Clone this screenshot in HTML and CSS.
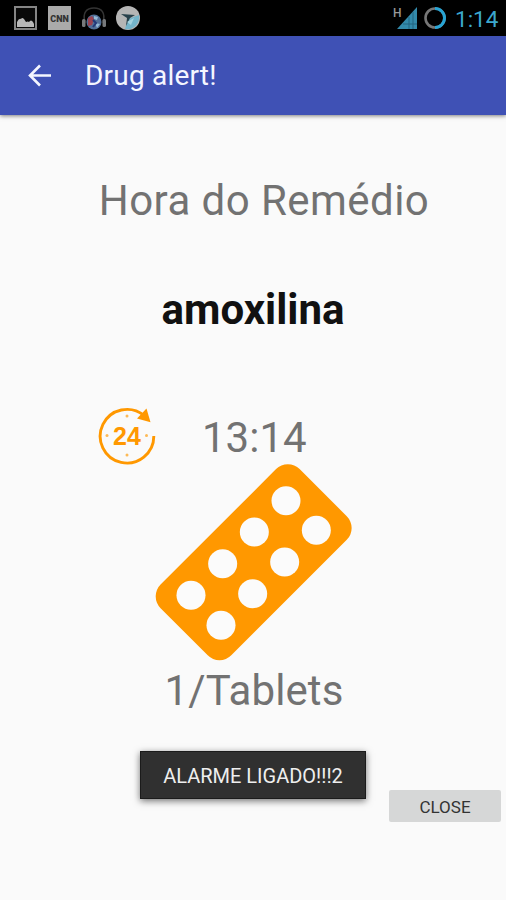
FILE: index.html
```html
<!DOCTYPE html>
<html lang="pt">
<head>
<meta charset="utf-8">
<title>Drug alert!</title>
<link rel="stylesheet" href="styles.css">
</head>
<body>
<div class="statusbar">
  <div class="notifications">
    <svg class="note" viewBox="0 0 24 24"><rect x="1" y="1" width="21" height="22" fill="#090909" stroke="#858585" stroke-width="2"/><path d="M3 21v-5q2-4 4-3 1-2 3 0l2 3q2-1 3 0 2-3 4 0l1 2v3z" fill="#b8b8b8"/></svg>
    <svg class="note" viewBox="0 0 24 24"><rect width="23" height="24" fill="#aaa"/><text class="cnn" x="11.5" y="15.5" text-anchor="middle">CNN</text></svg>
    <svg class="note" viewBox="0 0 24 24"><path d="M3 17C0 6 5 2 12 2s12 4 9 15" fill="none" stroke="#343434" stroke-width="1.6"/><circle cx="12" cy="16" r="7.5" fill="#526f96"/><path d="M6 12l4-2 2 3-2 6-4 1z" fill="#9b4250"/><path d="M12 10l4 1-1 3-3-1zM13 17l5 1-3 4z" fill="#93b8d5"/><path d="M11 14l3 3-3 4" fill="none" stroke="#233979" stroke-width="2"/><rect x="0" y="13" width="3.5" height="8" rx="1.5" fill="#77797b"/><rect x="20.5" y="13" width="3.5" height="8" rx="1.5" fill="#77797b"/></svg>
    <svg class="note" viewBox="0 0 24 24"><circle cx="12" cy="12" r="12" fill="#b5b5b5"/><path d="M23 9a12 12 0 0 1-14 14l3-10z" fill="#74b4ca"/><path d="M5 8l14 1-5 3-4 8 1-8z" fill="#28414b"/><path d="M11 16l7-4-3 7z" fill="#a4d2df"/></svg>
  </div>
  <div class="system">
    <svg class="signal" viewBox="0 0 25 24"><text class="network" x="0" y="11">H</text><path d="M24 1v22H4z" fill="#338aab"/><path d="M10 18h14M16 11v12M20 6v17" stroke="#236580" stroke-width="1"/></svg>
    <svg class="battery" viewBox="0 0 24 24"><circle cx="12" cy="12" r="9.5" fill="none" stroke="#777" stroke-width="2.6"/><path d="M12 2.5a9.5 9.5 0 0 1 0 19" fill="none" stroke="#27a4d4" stroke-width="3"/></svg>
    <span class="clock">1:14</span>
  </div>
</div>
<header class="appbar">
  <svg class="back" viewBox="0 0 24 24"><path d="M23 11.5H2M12 1.5L2 11.5l10 10" fill="none" stroke="#f4f6ff" stroke-width="2.6"/></svg>
  <h1 class="title">Drug alert!</h1>
</header>
<main class="content">
  <p class="heading">Hora do Remédio</p>
  <p class="drug">amoxilina</p>
  <div class="schedule">
    <svg class="repeat" viewBox="0 0 60 60"><path d="M46 10.5A26.8 26.8 0 1 0 55.8 31" fill="none" stroke="#ff9800" stroke-width="2.9"/><path d="M48.5 3.5l4 13.8L39 13.5z" fill="#ff9800"/><g fill="#ff9800" opacity=".65"><circle cx="29" cy="11" r="1.5"/><circle cx="29" cy="50" r="1.5"/><circle cx="9" cy="30.5" r="1.5"/><circle cx="48.5" cy="30.5" r="1.5"/></g><text class="hours" x="29" y="39.5" text-anchor="middle">24</text></svg>
    <span class="time">13:14</span>
  </div>
  <svg class="blister" viewBox="0 0 660 645"><rect x="32" y="172" width="590" height="300" rx="50" fill="#ff9800" transform="rotate(-45 326 323)"/><g fill="#fbfbfb"><circle cx="423" cy="137" r="43.5"/><circle cx="328" cy="231" r="43.5"/><circle cx="233" cy="326" r="43.5"/><circle cx="138" cy="421" r="43.5"/><circle cx="514" cy="226" r="43.5"/><circle cx="419" cy="321" r="43.5"/><circle cx="323" cy="416" r="43.5"/><circle cx="228" cy="511" r="43.5"/></g></svg>
  <p class="dose">1/Tablets</p>
  <div class="toast">ALARME LIGADO!!!2</div>
  <button class="close">CLOSE</button>
</main>
</body>
</html>
```
FILE: styles.css
```css
* { box-sizing: border-box; }
body { margin: 0; width: 506px; height: 900px; overflow: hidden; background: #fafafa; font-family: Roboto, sans-serif; display: flex; flex-direction: column; }
p, h1 { margin: 0; }
svg { display: block; flex: none; }
.statusbar { height: 36px; flex: none; background: #000; display: flex; justify-content: space-between; padding: 6px 8px 0 14px; }
.notifications { display: flex; gap: 10px; }
.note { width: 24px; height: 24px; }
.cnn { font: 900 9px Roboto, sans-serif; fill: #333; }
.system { display: flex; }
.signal { width: 25px; height: 24px; overflow: visible; }
.network { font: 500 12px Roboto, sans-serif; fill: #999; }
.battery { width: 24px; height: 24px; margin: 0 8px 0 5px; }
.clock { width: 43px; font-size: 22.5px; line-height: 26px; color: #3ba7ce; white-space: nowrap; }
.appbar { height: 79px; flex: none; background: #3f51b5; display: flex; align-items: center; padding: 0 28px 0 28px; box-shadow: 0 1px 4px rgba(0,0,0,.5); }
.back { width: 24px; height: 24px; }
.title { margin-left: 33px; font-size: 28px; font-weight: 400; line-height: 36px; letter-spacing: .2px; color: #f4f6ff; }
.content { display: flex; flex-direction: column; align-items: center; flex: 1; }
.heading, .time, .dose { font-size: 42px; line-height: 50px; color: #727272; white-space: nowrap; }
.heading { margin: 61px 0 0 22px; letter-spacing: .45px; }
.drug { margin-top: 59px; font-size: 42px; line-height: 50px; font-weight: 700; color: #111; }
.schedule { align-self: stretch; display: flex; margin-top: 70px; padding-left: 98px; height: 50px; }
.repeat { width: 60px; height: 60px; }
.hours { font: 700 25px "Liberation Sans", sans-serif; fill: #ff9800; }
.time { margin: 8px 0 0 44px; }
.blister { width: 220px; height: 215px; margin-left: 4px; }
.dose { margin: -4px 0 0 2px; letter-spacing: .1px; }
.toast { width: 226px; height: 48px; margin-top: 35px; background: #303030; border: 1px solid #1b1b1b; color: #eee; font-size: 20px; line-height: 48px; text-align: center; white-space: nowrap; box-shadow: 0 2px 7px rgba(0,0,0,.55); }
.close { align-self: flex-end; width: 112px; height: 32px; margin: -9px 5px 0 0; padding: 2px 0 0; border: 0; border-radius: 2px; background: #d6d7d7; color: #333; font: 400 17px Roboto, sans-serif; }
```
